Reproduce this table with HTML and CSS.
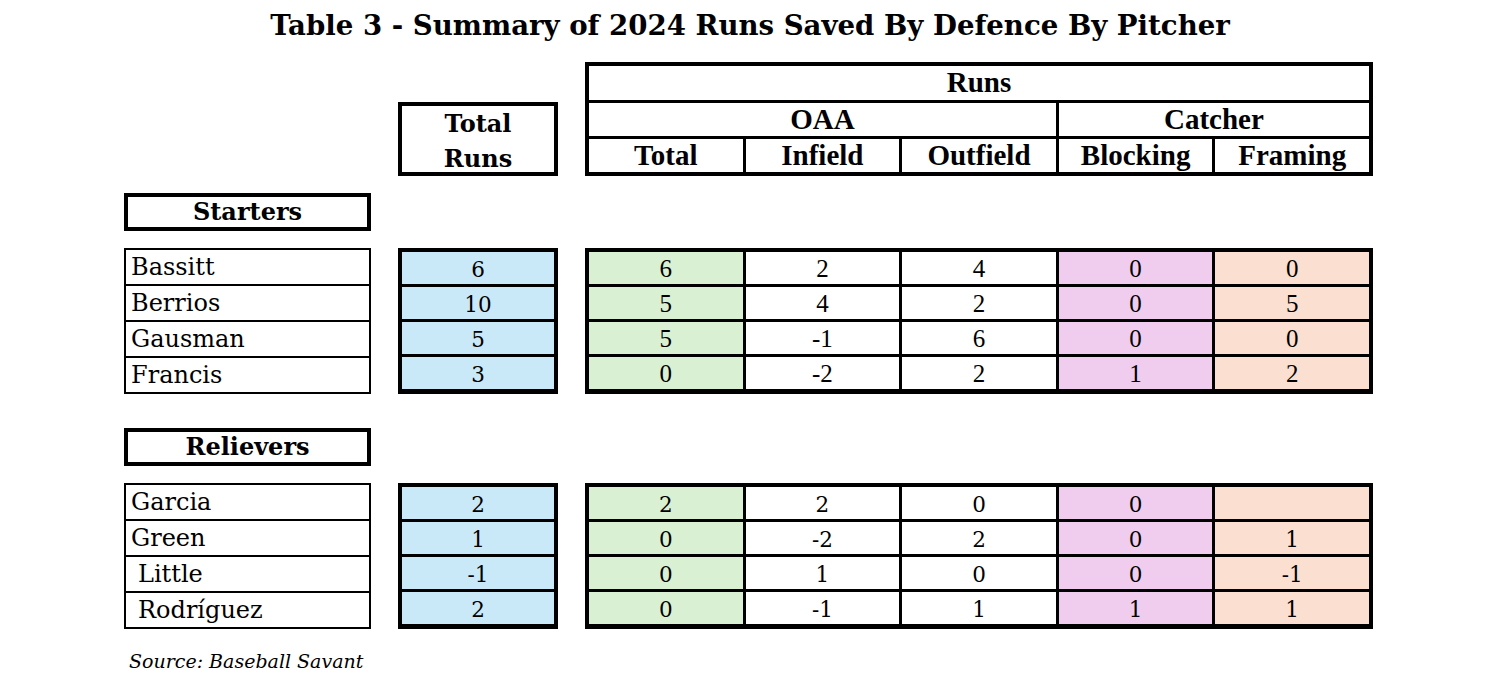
FILE: index.html
```html
<!DOCTYPE html>
<html lang="en">
<head>
<meta charset="utf-8">
<title>Table 3 - Summary of 2024 Runs Saved By Defence By Pitcher</title>
<link rel="stylesheet" href="styles.css">
</head>
<body>
<div class="page">
  <h1 class="title">Table 3 - Summary of 2024 Runs Saved By Defence By Pitcher</h1>
  <div class="layout">
    <div class="blank"></div>
    <div class="total-head">Total<br>Runs</div>
    <div class="head-grid">
      <div class="hcell span5">Runs</div>
      <div class="hcell span3">OAA</div>
      <div class="hcell span2">Catcher</div>
      <div class="hcell">Total</div>
      <div class="hcell">Infield</div>
      <div class="hcell">Outfield</div>
      <div class="hcell">Blocking</div>
      <div class="hcell">Framing</div>
    </div>

    <div class="section">Starters</div>

    <div class="names">
      <div class="name">Bassitt</div>
      <div class="name">Berrios</div>
      <div class="name">Gausman</div>
      <div class="name">Francis</div>
    </div>
    <div class="totals">
      <div class="num">6</div>
      <div class="num">10</div>
      <div class="num">5</div>
      <div class="num">3</div>
    </div>
    <div class="data lining">
      <div class="c green">6</div><div class="c">2</div><div class="c">4</div><div class="c pink">0</div><div class="c peach">0</div>
      <div class="c green">5</div><div class="c">4</div><div class="c">2</div><div class="c pink">0</div><div class="c peach">5</div>
      <div class="c green">5</div><div class="c">-1</div><div class="c">6</div><div class="c pink">0</div><div class="c peach">0</div>
      <div class="c green">0</div><div class="c">-2</div><div class="c">2</div><div class="c pink">1</div><div class="c peach">2</div>
    </div>

    <div class="section section-gap">Relievers</div>

    <div class="names">
      <div class="name">Garcia</div>
      <div class="name">Green</div>
      <div class="name indent">Little</div>
      <div class="name indent">Rodríguez</div>
    </div>
    <div class="totals">
      <div class="num">2</div>
      <div class="num">1</div>
      <div class="num">-1</div>
      <div class="num">2</div>
    </div>
    <div class="data">
      <div class="c green">2</div><div class="c">2</div><div class="c">0</div><div class="c pink">0</div><div class="c peach"></div>
      <div class="c green">0</div><div class="c">-2</div><div class="c">2</div><div class="c pink">0</div><div class="c peach">1</div>
      <div class="c green">0</div><div class="c">1</div><div class="c">0</div><div class="c pink">0</div><div class="c peach">-1</div>
      <div class="c green">0</div><div class="c">-1</div><div class="c">1</div><div class="c pink">1</div><div class="c peach">1</div>
    </div>
  </div>
  <p class="source">Source: Baseball Savant</p>
</div>
</body>
</html>
```
FILE: styles.css
```css
html, body {
  margin: 0;
  padding: 0;
  background: #ffffff;
}

body {
  font-family: "DejaVu Serif", "Liberation Serif", serif;
  color: #000000;
}

.page {
  width: 1500px;
  height: 691px;
  overflow: hidden;
}

.title {
  margin: 0;
  height: 52px;
  line-height: 52px;
  font-size: 27.6px;
  font-weight: bold;
  text-align: center;
}

.layout {
  margin-top: 10px;
  margin-left: 124px;
  display: grid;
  grid-template-columns: 247px 160px 788px;
  column-gap: 27px;
  row-gap: 17px;
}

.blank {
  grid-column: 1;
}

.total-head {
  grid-column: 2;
  align-self: end;
  height: 66px;
  border: 4px solid #000;
  font-weight: bold;
  font-size: 24px;
  line-height: 35px;
  text-align: center;
}

.head-grid {
  grid-column: 3;
  display: grid;
  grid-template-columns: repeat(5, 1fr);
  grid-template-rows: 34px 33px 33px;
  gap: 3px;
  padding: 4px;
  background: #000;
}

.hcell {
  background: #fff;
  font-family: "Liberation Serif", serif;
  font-weight: bold;
  font-size: 29px;
  line-height: 33px;
  text-align: center;
}

.span5 { grid-column: span 5; }
.span3 { grid-column: span 3; }
.span2 { grid-column: span 2; }

.section {
  grid-column: 1;
  height: 30px;
  border: 4px solid #000;
  font-weight: bold;
  font-size: 24px;
  line-height: 30px;
  text-align: center;
}

.section-gap {
  margin-top: 17px;
}

.names {
  grid-column: 1;
  display: grid;
  grid-auto-rows: 34px;
  gap: 2px;
  padding: 2px;
  background: #000;
}

.name {
  background: #fff;
  font-size: 24px;
  line-height: 34px;
  padding-left: 5px;
}

.name.indent {
  padding-left: 12px;
}

.totals {
  grid-column: 2;
  display: grid;
  grid-auto-rows: 32px;
  gap: 3px;
  padding: 4px;
  background: #000;
}

.num {
  background: #c9e9f8;
  font-size: 21.5px;
  line-height: 35px;
  text-align: center;
}

.data {
  grid-column: 3;
  display: grid;
  grid-template-columns: repeat(5, 1fr);
  grid-auto-rows: 32px;
  gap: 3px;
  padding: 4px;
  background: #000;
}

.c {
  background: #fff;
  font-size: 21.5px;
  line-height: 35px;
  text-align: center;
}

.data.lining .c {
  font-family: "Liberation Serif", serif;
  font-size: 25px;
  line-height: 33px;
}

.green { background: #d9f1d2; }
.pink { background: #f0cdee; }
.peach { background: #fbe0d2; }

.source {
  margin: 21px 0 0 129px;
  font-style: italic;
  font-size: 19px;
}
```
